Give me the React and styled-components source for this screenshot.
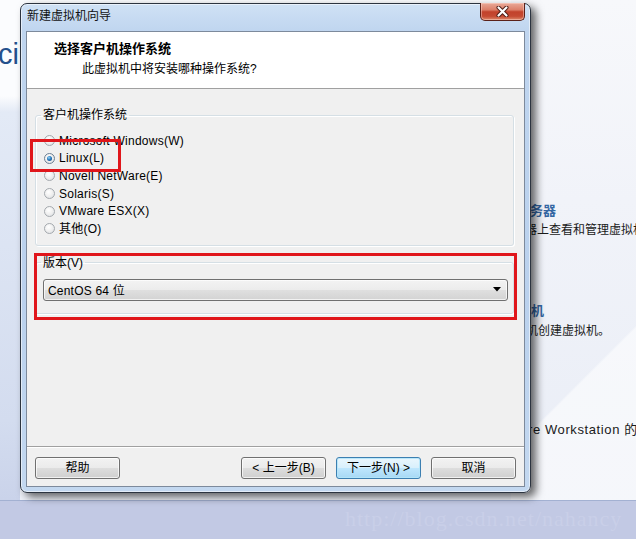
import React from "react";
import styled, { createGlobalStyle, css } from "styled-components";

const Global = createGlobalStyle`
  html, body { margin: 0; padding: 0; }
  body { font-family: "Liberation Sans", "Noto Sans CJK SC", sans-serif; }
`;

const UI = `"Liberation Sans", "Noto Sans CJK SC", sans-serif`;

const Desktop = styled.div`
  position: relative;
  width: 636px;
  height: 539px;
  overflow: hidden;
  display: grid;
  grid-template-columns: 20px 1fr 125px;
  grid-template-rows: 500px 39px;
  background: #f3f5fa;
`;

const LeftStrip = styled.div`
  background: linear-gradient(
    to bottom,
    #fbfcfe 0px,
    #fbfcfe 96px,
    #e3eaf6 112px,
    #d3dcef 420px,
    #cad3ea 500px
  );
  padding-top: 38px;
  overflow: hidden;
`;

const BigTitle = styled.div`
  font-family: "Liberation Sans", sans-serif;
  font-size: 29px;
  color: #24508c;
  margin-left: -2px;
  white-space: nowrap;
`;

const Middle = styled.div`
  background: linear-gradient(to bottom, #fafbfd, #eef1f8);
`;

const RightStrip = styled.div`
  background:
    linear-gradient(135deg, rgba(255,255,255,0) 0%, rgba(255,255,255,0) 72%, rgba(255,255,255,0.55) 72.5%, rgba(255,255,255,0.55) 100%),
    linear-gradient(to bottom, #f7f8fb 0%, #f1f3f9 40%, #e9edf6 100%);
  padding-top: 203px;
  display: flex;
  flex-direction: column;
  overflow: hidden;
  font-family: ${UI};
`;

const BackLine = styled.div`
  white-space: nowrap;
  line-height: 16px;
  padding-left: ${(p) => p.$indent}px;
  margin-top: ${(p) => p.$top || 0}px;
  font-size: ${(p) => (p.$head ? 13 : p.$size || 12)}px;
  letter-spacing: ${(p) => p.$spacing || 0}px;
  font-weight: ${(p) => (p.$head ? 700 : 400)};
  color: ${(p) => (p.$head ? "#3466a2" : "#1a1a1a")};
`;

const Band = styled.div`
  grid-column: 1 / -1;
  background: #c2c9e4;
  border-top: 1px solid #a3b1d2;
  padding-left: 345px;
  font-family: "Liberation Serif", serif;
  font-size: 22px;
  letter-spacing: 1px;
  line-height: 36px;
  color: #c9cfe8;
  white-space: nowrap;
`;

const Dialog = styled.div`
  position: absolute;
  left: 20px;
  top: 3px;
  width: 511px;
  height: 490px;
  box-sizing: border-box;
  border: 1px solid #2c3440;
  border-radius: 7px;
  background: linear-gradient(to bottom, #cfe1f5 0px, #bfd5ef 28px, #bad1ed 60%, #c3d8f0 100%);
  box-shadow:
    inset 0 0 0 1px rgba(255, 255, 255, 0.55),
    5px 4px 9px rgba(0, 0, 0, 0.6);
  display: flex;
  flex-direction: column;
  font-family: ${UI};
  font-size: 12px;
  color: #000;
`;

const TitleBar = styled.div`
  height: 27px;
  display: flex;
  align-items: flex-start;
  padding: 0 5px 0 6px;
`;

const TitleText = styled.div`
  padding-top: 5px;
  line-height: 14px;
  font-size: 12px;
  color: #111;
`;

const CloseButton = styled.div`
  margin-left: auto;
  margin-top: -1px;
  width: 45px;
  height: 18px;
  box-sizing: border-box;
  border: 1px solid #5a2119;
  border-top: none;
  border-radius: 0 0 5px 5px;
  background: linear-gradient(
    to bottom,
    #e9aa98 0%,
    #dc7f69 40%,
    #c2422b 52%,
    #c54a32 78%,
    #de8a6c 100%
  );
  box-shadow: inset 0 0 0 1px rgba(255, 220, 210, 0.45);
  display: flex;
  align-items: center;
  justify-content: center;
`;

const Client = styled.div`
  flex: 1;
  margin: 0 5px 5px 5px;
  border: 1px solid #7d8a9c;
  display: flex;
  flex-direction: column;
  background: #f0f0f0;
  min-height: 0;
`;

const Header = styled.div`
  height: 47px;
  background: #fff;
  border-bottom: 1px solid #a0a0a0;
  padding: 9px 0 0 27px;
  box-sizing: content-box;
`;

const HeaderTitle = styled.div`
  font-size: 13px;
  font-weight: 700;
  line-height: 14px;
  font-family: "Noto Sans CJK SC", sans-serif;
`;

const HeaderSub = styled.div`
  margin-top: 7px;
  padding-left: 28px;
  font-size: 12px;
  line-height: 14px;
`;

const Body = styled.div`
  flex: 1;
  display: flex;
  flex-direction: column;
  min-height: 0;
`;

const Groups = styled.div`
  padding: 19px 10px 0 8px;
  display: flex;
  flex-direction: column;
  gap: 10px;
`;

const Group = styled.fieldset`
  margin: 0;
  padding: ${(p) => p.$pad};
  border: 1px solid #d5dfe5;
  border-radius: 3px;
  box-shadow: inset 1px 1px 0 #fff, 1px 1px 0 #fff;
  min-width: 0;
`;

const Legend = styled.legend`
  margin-left: -3px;
  padding: 0 2px;
  font-size: 12px;
  line-height: 14px;
  color: #000;
`;

const RadioList = styled.div`
  display: flex;
  flex-direction: column;
`;

const RadioRow = styled.label`
  height: 17.6px;
  display: flex;
  align-items: center;
  gap: 4px;
  font-size: 12px;
  letter-spacing: 0.25px;
  line-height: 14px;
  white-space: nowrap;
`;

const RadioDot = styled.span`
  position: relative;
  width: 11px;
  height: 11px;
  box-sizing: border-box;
  border-radius: 50%;
  border: 1px solid #a4a9ae;
  background: radial-gradient(circle at 40% 35%, #ffffff 0%, #f1f1f1 45%, #d9dcdf 100%);
  flex: none;
  ${(p) =>
    p.$checked &&
    css`
      border-color: #6c7f93;
      &::after {
        content: "";
        position: absolute;
        left: 2px;
        top: 2px;
        width: 5px;
        height: 5px;
        border-radius: 50%;
        background: radial-gradient(circle at 40% 35%, #9ad8f7 0%, #2a7cc0 45%, #0f3d73 100%);
      }
    `}
`;

const Combo = styled.div`
  margin-left: -1px;
  height: 22px;
  box-sizing: border-box;
  border: 1px solid #707070;
  border-radius: 3px;
  background: linear-gradient(to bottom, #f3f3f3 0%, #ececec 48%, #dfdfdf 52%, #d3d3d3 100%);
  box-shadow: inset 0 0 0 1px rgba(255, 255, 255, 0.7);
  display: flex;
  align-items: center;
  padding: 0 6px 0 4px;
  font-size: 12px;
  letter-spacing: 0.2px;
`;

const ComboArrow = styled.svg`
  margin-left: auto;
  flex: none;
`;

const Footer = styled.div`
  margin-top: auto;
  border-top: 1px solid #a0a0a0;
  box-shadow: inset 0 1px 0 #fff;
  padding: 10px 8px 7px 8px;
  display: flex;
  gap: 10px;
`;

const Button = styled.div`
  width: 85px;
  height: 22px;
  box-sizing: border-box;
  border: 1px solid ${(p) => (p.$default ? "#3c7fb1" : "#707070")};
  border-radius: 3px;
  background: ${(p) =>
    p.$default
      ? "linear-gradient(to bottom, #eaf6fd 0%, #d9f0fc 48%, #bee6fd 52%, #a7d9f5 100%)"
      : "linear-gradient(to bottom, #f2f2f2 0%, #ebebeb 48%, #dddddd 52%, #cfcfcf 100%)"};
  box-shadow: inset 0 0 0 1px ${(p) => (p.$default ? "rgba(180,230,250,0.9)" : "rgba(255,255,255,0.7)")};
  display: flex;
  align-items: center;
  justify-content: center;
  font-size: 12px;
  line-height: 14px;
  white-space: nowrap;
  ${(p) => p.$push && css`margin-left: auto;`}
`;

const Annotation = styled.div`
  position: absolute;
  box-sizing: border-box;
  border: 3px solid #e0161b;
  left: ${(p) => p.$x}px;
  top: ${(p) => p.$y}px;
  width: ${(p) => p.$w}px;
  height: ${(p) => p.$h}px;
  pointer-events: none;
`;

const options = [
  "Microsoft Windows(W)",
  "Linux(L)",
  "Novell NetWare(E)",
  "Solaris(S)",
  "VMware ESX(X)",
  "其他(O)",
];

export default function App() {
  return (
    <>
      <Global />
      <Desktop>
        <LeftStrip>
          <BigTitle>ci</BigTitle>
        </LeftStrip>
        <Middle />
        <RightStrip>
          <BackLine $head $indent={6}>服务器</BackLine>
          <BackLine $indent={14} $top={3}>器上查看和管理虚拟机</BackLine>
          <BackLine $head $indent={7} $top={65}>拟机</BackLine>
          <BackLine $indent={15} $top={4}>机创建虚拟机。</BackLine>
          <BackLine $indent={17} $top={83} $size={13} $spacing={0.6}>re Workstation 的软件</BackLine>
        </RightStrip>
        <Band>http://blog.csdn.net/nahancy</Band>

        <Dialog>
          <TitleBar>
            <TitleText>新建虚拟机向导</TitleText>
            <CloseButton>
              <svg width="13" height="11" viewBox="0 0 13 11">
                <path d="M2.5 1.5 L10.5 9.5 M10.5 1.5 L2.5 9.5" stroke="#4a1a12" strokeWidth="4" strokeLinecap="round" />
                <path d="M2.5 1.5 L10.5 9.5 M10.5 1.5 L2.5 9.5" stroke="#ffffff" strokeWidth="2.2" strokeLinecap="round" />
              </svg>
            </CloseButton>
          </TitleBar>
          <Client>
            <Header>
              <HeaderTitle>选择客户机操作系统</HeaderTitle>
              <HeaderSub>此虚拟机中将安装哪种操作系统?</HeaderSub>
            </Header>
            <Body>
              <Groups>
                <Group $pad="10px 8px 7px 8px">
                  <Legend>客户机操作系统</Legend>
                  <RadioList>
                    {options.map((o) => (
                      <RadioRow key={o}>
                        <RadioDot $checked={o === "Linux(L)"} />
                        {o}
                      </RadioRow>
                    ))}
                  </RadioList>
                </Group>
                <Group $pad="9px 5px 12px 8px">
                  <Legend>版本(V)</Legend>
                  <Combo>
                    CentOS 64 位
                    <ComboArrow width="8" height="5" viewBox="0 0 8 5">
                      <path d="M0 0 H8 L4 4.5 Z" fill="#000" />
                    </ComboArrow>
                  </Combo>
                </Group>
              </Groups>
              <Footer>
                <Button>帮助</Button>
                <Button $push>&lt; 上一步(B)</Button>
                <Button $default>下一步(N) &gt;</Button>
                <Button>取消</Button>
              </Footer>
            </Body>
          </Client>
        </Dialog>

        <Annotation $x={30} $y={139} $w={91} $h={33} />
        <Annotation $x={34} $y={253} $w={483} $h={67} />
      </Desktop>
    </>
  );
}
